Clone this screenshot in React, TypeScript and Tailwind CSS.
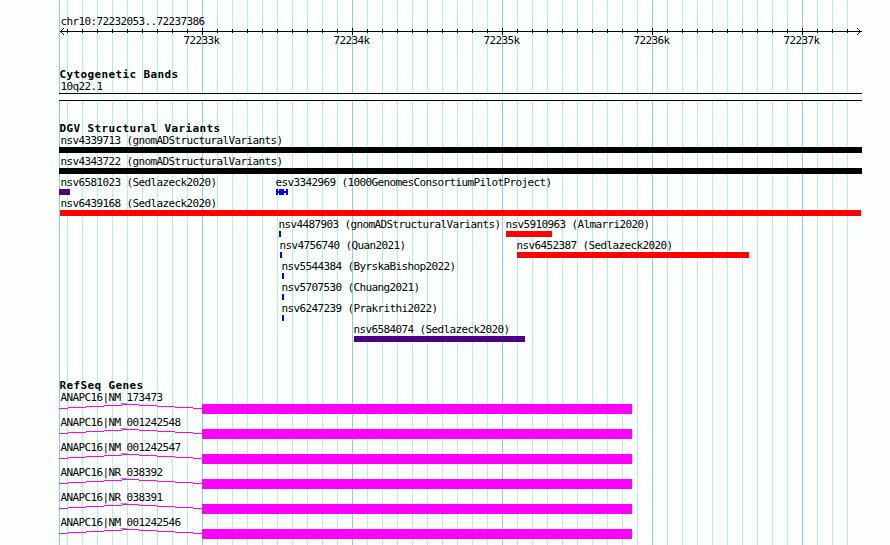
import type { ReactNode } from "react";

type Feature = {
    label: string;
    start: number;
    end: number;
    color: string;
    // left edge of the label
    labelX: number;
    inversion?: boolean;
};

const LEFT = 59;
const RIGHT = 862;

const gridLines = Array.from({ length: 53 }, (_, i) => ({ x: 67 + i * 15, major: i % 10 === 9 }));

const rulerLabels = ["72233k", "72234k", "72235k", "72236k", "72237k"];

const variantRows: Feature[][] = [
    [{ label: "nsv4339713 (gnomADStructuralVariants)", start: 59, end: 862, color: "bg-black", labelX: 60.4 }],
    [{ label: "nsv4343722 (gnomADStructuralVariants)", start: 59, end: 862, color: "bg-black", labelX: 60.4 }],
    [
        { label: "nsv6581023 (Sedlazeck2020)", start: 59, end: 70, color: "bg-[#4b0082]", labelX: 60.4 },
        { label: "esv3342969 (1000GenomesConsortiumPilotProject)", start: 276, end: 288, color: "bg-[#0000ff]", labelX: 275.4, inversion: true },
    ],
    [{ label: "nsv6439168 (Sedlazeck2020)", start: 60, end: 861, color: "bg-[#ff0000]", labelX: 60.4 }],
    [
        { label: "nsv4487903 (gnomADStructuralVariants)", start: 279, end: 281, color: "bg-[#0000ff]", labelX: 278.4 },
        { label: "nsv5910963 (Almarri2020)", start: 506, end: 552, color: "bg-[#ff0000]", labelX: 505.4 },
    ],
    [
        { label: "nsv4756740 (Quan2021)", start: 280, end: 282, color: "bg-[#0000ff]", labelX: 279.4 },
        { label: "nsv6452387 (Sedlazeck2020)", start: 517, end: 749, color: "bg-[#ff0000]", labelX: 516.4 },
    ],
    [{ label: "nsv5544384 (ByrskaBishop2022)", start: 282, end: 284, color: "bg-[#0000ff]", labelX: 281.4 }],
    [{ label: "nsv5707530 (Chuang2021)", start: 282, end: 284, color: "bg-[#0000ff]", labelX: 281.4 }],
    [{ label: "nsv6247239 (Prakrithi2022)", start: 282, end: 284, color: "bg-[#0000ff]", labelX: 281.4 }],
    [{ label: "nsv6584074 (Sedlazeck2020)", start: 354, end: 525, color: "bg-[#4b0082]", labelX: 353.4 }],
];

const genes = [
    "ANAPC16|NM_173473",
    "ANAPC16|NM_001242548",
    "ANAPC16|NM_001242547",
    "ANAPC16|NR_038392",
    "ANAPC16|NR_038391",
    "ANAPC16|NM_001242546",
];

function GridLines() {
    return (
        <div className="absolute inset-0 -z-10 flex gap-[14px]">
            <div className="-mr-[7px] ml-[59px] w-px shrink-0 bg-[#87ceeb]" />
            {gridLines.map((line) => (
                <div key={line.x} className={`w-px shrink-0 ${line.major ? "bg-[#87ceeb]" : "bg-[#afeeee]"}`} />
            ))}
        </div>
    );
}

function TrackTitle({ children }: { children: ReactNode }) {
    return <h2 className="ml-[59.5px] h-3 text-[11px] leading-[13px] font-bold tracking-[0.378px]">{children}</h2>;
}

function Ruler() {
    return (
        <section>
            <p className="ml-[60.4px] h-[13px]">chr10:72232053..72237386</p>
            <svg width="890" height="7" shapeRendering="crispEdges" className="-mb-px block">
                <rect x="60" y="3" width="802" height="1" />
                {/* arrow heads */}
                {[0, 1, 2, 3].map((i) => (
                    <g key={i}>
                        <rect x={60 + i} y={3 - i} width="1" height="1" />
                        <rect x={60 + i} y={3 + i} width="1" height="1" />
                        <rect x={860 - i} y={3 - i} width="1" height="1" />
                        <rect x={860 - i} y={3 + i} width="1" height="1" />
                    </g>
                ))}
                {gridLines.map((line) => (
                    <rect key={line.x} x={line.x} y={line.major ? 0 : 1} width="1" height={line.major ? 7 : 4} />
                ))}
            </svg>
            <div className="ml-[183.4px] flex h-[13px]">
                {rulerLabels.map((label) => (
                    <span key={label} className="w-[150px] shrink-0">{label}</span>
                ))}
            </div>
        </section>
    );
}

function FeatureGlyph({ feature }: { feature: Feature }) {
    if (feature.inversion) {
        return (
            <div className="flex h-[6px] w-3 items-center" style={{ marginLeft: feature.start }}>
                <div className={`h-full w-[2px] ${feature.color}`} />
                <div className={`h-[2px] w-px ${feature.color}`} />
                <div className={`h-full w-[5px] ${feature.color}`} />
                <div className={`h-[2px] w-[2px] ${feature.color}`} />
                <div className={`h-full w-[2px] ${feature.color}`} />
            </div>
        );
    }
    return <div className={`h-[6px] ${feature.color}`} style={{ marginLeft: feature.start, width: feature.end - feature.start }} />;
}

function VariantRow({ features }: { features: Feature[] }) {
    return (
        <div className="grid h-[21px]">
            {features.map((feature) => (
                <div key={feature.label} className="[grid-area:1/1]">
                    <p className="h-[13px]" style={{ marginLeft: feature.labelX }}>{feature.label}</p>
                    <FeatureGlyph feature={feature} />
                </div>
            ))}
        </div>
    );
}

function GeneRow({ name }: { name: string }) {
    return (
        <div className="h-[25px] pl-[59px]">
            <p className="ml-[1.4px] h-[13px]">{name}</p>
            <div className="flex">
                {/* intron, drawn as a shallow stepped hat */}
                <svg width="143" height="10" shapeRendering="crispEdges" className="block">
                    <path
                        d="M0 4.5H9M9 3.5H27M27 2.5H45M45 1.5H63M63 .5H80M80 1.5H98M98 2.5H116M116 3.5H134M134 4.5H143"
                        fill="none"
                        stroke="#ff00ff"
                    />
                </svg>
                <div className="h-[10px] w-[430px] bg-[#ff00ff]" />
            </div>
        </div>
    );
}

export default function App() {
    return (
        <div className="relative isolate h-[545px] w-[890px] overflow-hidden bg-[#fdfffd] pt-[15px] font-['DejaVu_Sans_Mono',monospace] text-[11px] leading-[13px] tracking-[-0.622px] whitespace-nowrap text-black">
            <GridLines />
            <Ruler />
            <section className="mt-[21px]">
                <TrackTitle>Cytogenetic Bands</TrackTitle>
                <p className="ml-[60.4px] h-[13px]">10q22.1</p>
                <div className="h-2 border-y border-black bg-[#fdfffd]" style={{ marginLeft: LEFT, width: RIGHT - LEFT }} />
            </section>
            <section className="mt-[21px]">
                <TrackTitle>DGV Structural Variants</TrackTitle>
                {variantRows.map((features) => (
                    <VariantRow key={features[0].label} features={features} />
                ))}
            </section>
            <section className="mt-[35px]">
                <TrackTitle>RefSeq Genes</TrackTitle>
                {genes.map((name) => (
                    <GeneRow key={name} name={name} />
                ))}
            </section>
        </div>
    );
}
